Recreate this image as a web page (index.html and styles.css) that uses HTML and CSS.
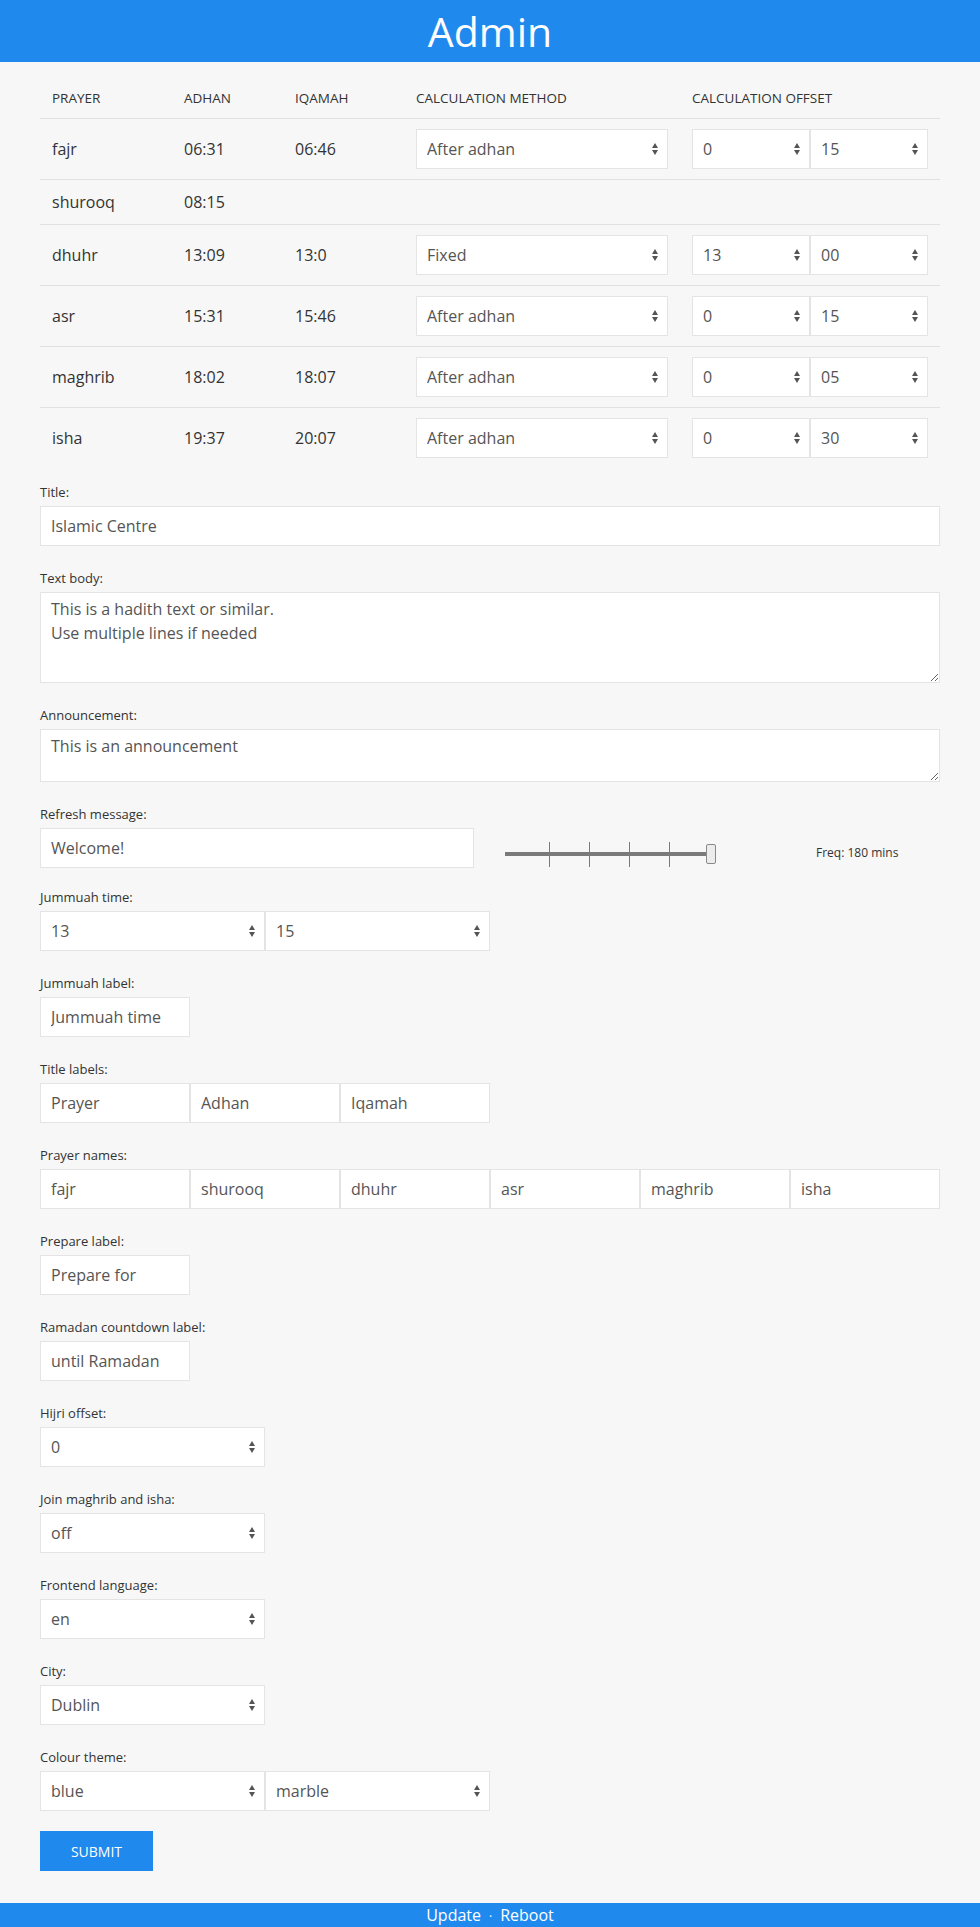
FILE: index.html
```html
<!DOCTYPE html>
<html lang="en">
<head>
<meta charset="utf-8">
<title>Admin</title>
<link rel="stylesheet" href="styles.css">
</head>
<body>
<header class="topbar"><h1>Admin</h1></header>
<main class="container">
  <table class="prayers">
    <colgroup>
      <col class="c-prayer"><col class="c-adhan"><col class="c-iqamah"><col class="c-method"><col class="c-offset">
    </colgroup>
    <thead>
      <tr><th>Prayer</th><th>Adhan</th><th>Iqamah</th><th>Calculation method</th><th>Calculation offset</th></tr>
    </thead>
    <tbody>
      <tr>
        <td>fajr</td><td>06:31</td><td>06:46</td>
        <td><div class="sel"><select class="control"><option>After adhan</option></select></div></td>
        <td><div class="pair"><div class="sel"><select class="control"><option>0</option></select></div><div class="sel"><select class="control"><option>15</option></select></div></div></td>
      </tr>
      <tr class="plain">
        <td>shurooq</td><td>08:15</td><td></td><td></td><td></td>
      </tr>
      <tr>
        <td>dhuhr</td><td>13:09</td><td>13:0</td>
        <td><div class="sel"><select class="control"><option>Fixed</option></select></div></td>
        <td><div class="pair"><div class="sel"><select class="control"><option>13</option></select></div><div class="sel"><select class="control"><option>00</option></select></div></div></td>
      </tr>
      <tr>
        <td>asr</td><td>15:31</td><td>15:46</td>
        <td><div class="sel"><select class="control"><option>After adhan</option></select></div></td>
        <td><div class="pair"><div class="sel"><select class="control"><option>0</option></select></div><div class="sel"><select class="control"><option>15</option></select></div></div></td>
      </tr>
      <tr>
        <td>maghrib</td><td>18:02</td><td>18:07</td>
        <td><div class="sel"><select class="control"><option>After adhan</option></select></div></td>
        <td><div class="pair"><div class="sel"><select class="control"><option>0</option></select></div><div class="sel"><select class="control"><option>05</option></select></div></div></td>
      </tr>
      <tr>
        <td>isha</td><td>19:37</td><td>20:07</td>
        <td><div class="sel"><select class="control"><option>After adhan</option></select></div></td>
        <td><div class="pair"><div class="sel"><select class="control"><option>0</option></select></div><div class="sel"><select class="control"><option>30</option></select></div></div></td>
      </tr>
    </tbody>
  </table>

  <form class="settings">
    <div class="field">
      <label class="lbl">Title:</label>
      <input class="control full" type="text" value="Islamic Centre">
    </div>
    <div class="field">
      <label class="lbl">Text body:</label>
      <textarea class="control area tall">This is a hadith text or similar.
Use multiple lines if needed</textarea>
    </div>
    <div class="field">
      <label class="lbl">Announcement:</label>
      <textarea class="control area short">This is an announcement</textarea>
    </div>
    <div class="field tight">
      <label class="lbl">Refresh message:</label>
      <div class="refresh-row">
        <input class="control msg" type="text" value="Welcome!">
        <div class="slider">
          <div class="track"></div>
          <div class="tick t1"></div>
          <div class="tick t2"></div>
          <div class="tick t3"></div>
          <div class="tick t4"></div>
          <div class="thumb"></div>
        </div>
        <div class="freq">Freq: 180 mins</div>
      </div>
    </div>
    <div class="field">
      <label class="lbl">Jummuah time:</label>
      <div class="row">
        <div class="sel w-half"><select class="control"><option>13</option></select></div>
        <div class="sel w-half"><select class="control"><option>15</option></select></div>
      </div>
    </div>
    <div class="field">
      <label class="lbl">Jummuah label:</label>
      <input class="control w-sixth" type="text" value="Jummuah time">
    </div>
    <div class="field">
      <label class="lbl">Title labels:</label>
      <div class="row">
        <input class="control w-sixth" type="text" value="Prayer">
        <input class="control w-sixth" type="text" value="Adhan">
        <input class="control w-sixth" type="text" value="Iqamah">
      </div>
    </div>
    <div class="field">
      <label class="lbl">Prayer names:</label>
      <div class="row">
        <input class="control w-sixth" type="text" value="fajr">
        <input class="control w-sixth" type="text" value="shurooq">
        <input class="control w-sixth" type="text" value="dhuhr">
        <input class="control w-sixth" type="text" value="asr">
        <input class="control w-sixth" type="text" value="maghrib">
        <input class="control w-sixth" type="text" value="isha">
      </div>
    </div>
    <div class="field">
      <label class="lbl">Prepare label:</label>
      <input class="control w-sixth" type="text" value="Prepare for">
    </div>
    <div class="field">
      <label class="lbl">Ramadan countdown label:</label>
      <input class="control w-sixth" type="text" value="until Ramadan">
    </div>
    <div class="field">
      <label class="lbl">Hijri offset:</label>
      <div class="sel w-half"><select class="control"><option>0</option></select></div>
    </div>
    <div class="field">
      <label class="lbl">Join maghrib and isha:</label>
      <div class="sel w-half"><select class="control"><option>off</option></select></div>
    </div>
    <div class="field">
      <label class="lbl">Frontend language:</label>
      <div class="sel w-half"><select class="control"><option>en</option></select></div>
    </div>
    <div class="field">
      <label class="lbl">City:</label>
      <div class="sel w-half"><select class="control"><option>Dublin</option></select></div>
    </div>
    <div class="field last">
      <label class="lbl">Colour theme:</label>
      <div class="row">
        <div class="sel w-half"><select class="control"><option>blue</option></select></div>
        <div class="sel w-half"><select class="control"><option>marble</option></select></div>
      </div>
    </div>
    <button class="btn" type="button">Submit</button>
  </form>
</main>
<footer class="footer"><a href="#">Update</a><span class="dot">·</span><a href="#">Reboot</a></footer>
</body>
</html>
```

FILE: styles.css
```css
html, body {
  margin: 0;
  padding: 0;
}
body {
  background: #f7f7f7;
  font-family: "Open Sans", "DejaVu Sans", sans-serif;
  color: #333;
}
.topbar {
  background: #1f89ee;
  height: 62px;
  text-align: center;
  color: #fff;
}
.topbar h1 {
  margin: 0;
  font-size: 41px;
  line-height: 62px;
  font-weight: normal;
}
.container {
  width: 900px;
  margin: 0 auto;
  padding-top: 16px;
}
.prayers {
  width: 100%;
  table-layout: fixed;
  border-collapse: separate;
  border-spacing: 0;
  margin-bottom: 14px;
}
.c-prayer { width: 132px; }
.c-adhan { width: 111px; }
.c-iqamah { width: 121px; }
.c-method { width: 276px; }
.c-offset { width: 260px; }
.prayers th {
  text-align: left;
  font-weight: normal;
  font-size: 13.5px;
  text-transform: uppercase;
  padding: 10px 12px;
  line-height: 20px;
  color: #333;
}
.prayers td {
  padding: 10px 12px;
  border-top: 1px solid #e1e1e1;
  font-size: 16px;
  line-height: 24px;
  vertical-align: middle;
  color: #333;
}
.prayers tbody tr:last-child td {
  border-bottom: none;
}
.pair {
  display: flex;
}
.pair .sel {
  flex: 1 1 0;
}
.control {
  box-sizing: border-box;
  height: 40px;
  border: 1px solid #e4e4e4;
  border-radius: 0;
  background: #fff;
  font-family: "Open Sans", "DejaVu Sans", sans-serif;
  font-size: 16px;
  color: #555;
  padding: 0 10px;
  margin: 0;
  outline: none;
}
select.control {
  -webkit-appearance: none;
  appearance: none;
  width: 100%;
  display: block;
}
.sel {
  position: relative;
}
.sel::before,
.sel::after {
  content: "";
  position: absolute;
  right: 10px;
  width: 0;
  height: 0;
  border-left: 3px solid transparent;
  border-right: 3px solid transparent;
  pointer-events: none;
}
.sel::before {
  top: 50%;
  margin-top: -6px;
  border-bottom: 5px solid #555;
}
.sel::after {
  top: 50%;
  margin-top: 1px;
  border-top: 5px solid #555;
}
.field {
  margin-bottom: 22px;
}
.field.tight {
  margin-bottom: 19px;
}
.field.last {
  margin-bottom: 20px;
}
.lbl {
  display: block;
  font-size: 13px;
  line-height: 20px;
  margin-bottom: 4px;
  color: #333;
}
.full {
  width: 100%;
  display: block;
}
.area {
  display: block;
  width: 100%;
  padding: 4px 10px;
  line-height: 24px;
  resize: vertical;
}
.area.tall { height: 91px; }
.area.short { height: 53px; }
.row {
  display: flex;
}
.w-half {
  width: 225px;
  flex: none;
}
.w-sixth {
  width: 150px;
  flex: none;
}
.refresh-row {
  display: flex;
  align-items: flex-start;
}
.msg {
  width: 434px;
  flex: none;
}
.slider {
  position: relative;
  width: 212px;
  height: 40px;
  margin-left: 31px;
  flex: none;
}
.track {
  position: absolute;
  left: 0;
  top: 24px;
  width: 203px;
  height: 4px;
  background: #7a7a7a;
}
.tick {
  position: absolute;
  top: 14px;
  width: 1px;
  height: 25px;
  background: #7a7a7a;
}
.t1 { left: 44px; }
.t2 { left: 84px; }
.t3 { left: 124px; }
.t4 { left: 164px; }
.thumb {
  position: absolute;
  left: 201px;
  top: 16px;
  width: 8px;
  height: 18px;
  background: #ececec;
  border: 1px solid #8a8a8a;
  border-radius: 2px;
}
.freq {
  margin-left: 99px;
  padding-top: 17px;
  font-size: 12px;
  line-height: 16px;
  color: #333;
}
.btn {
  display: block;
  width: 113px;
  height: 40px;
  background: #1f89ee;
  color: #fff;
  border: 0;
  border-radius: 0;
  font-family: "Open Sans", "DejaVu Sans", sans-serif;
  font-size: 14px;
  text-transform: uppercase;
  margin: 0 0 32px 0;
  padding: 0;
}
.footer {
  background: #1f89ee;
  height: 24px;
  line-height: 24px;
  text-align: center;
  font-size: 16px;
  color: #fff;
}
.footer a {
  color: #fff;
  text-decoration: none;
}
.footer .dot {
  display: inline-block;
  margin: 0 8px;
  font-size: 12px;
}
```
